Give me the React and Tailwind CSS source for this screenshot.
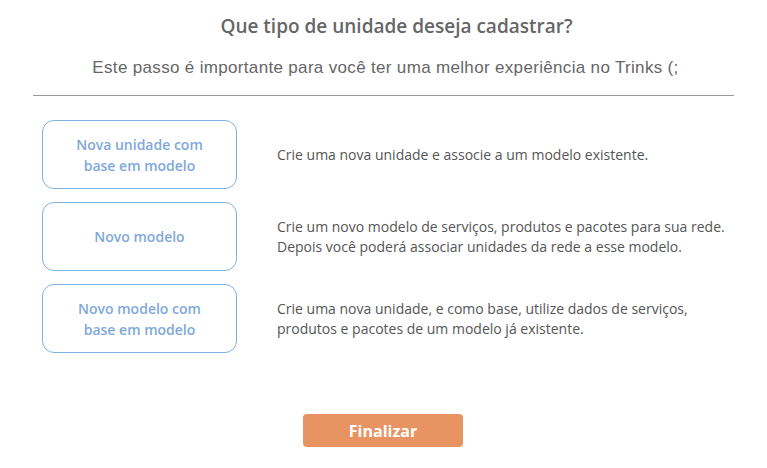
const options = [
  {
    label: ["Nova unidade com", "base em modelo"],
    text: ["Crie uma nova unidade e associe a um modelo existente."],
  },
  {
    label: ["Novo modelo"],
    text: [
      "Crie um novo modelo de serviços, produtos e pacotes para sua rede.",
      "Depois você poderá associar unidades da rede a esse modelo.",
    ],
  },
  {
    label: ["Novo modelo com", "base em modelo"],
    text: [
      "Crie uma nova unidade, e como base, utilize dados de serviços,",
      "produtos e pacotes de um modelo já existente.",
    ],
  },
];

export default function App() {
  return (
    <div className="min-h-screen w-[767px] bg-white font-['Open_Sans',sans-serif]">
      <div className="flex flex-col items-center pt-[14px]">
        <h1 className="ml-[26px] text-[19px] font-semibold leading-[24px] text-[#666]">
          Que tipo de unidade deseja cadastrar?
        </h1>
        <p className="mt-[20px] ml-[4px] font-['Liberation_Sans',Arial,sans-serif] text-[17px] leading-[20px] tracking-[0.33px] text-[#666]">
          Este passo é importante para você ter uma melhor experiência no Trinks (;
        </p>
      </div>
      <div className="mx-[33px] mt-[17px] h-px bg-[#999]" />

      <div className="mt-[24px] flex flex-col gap-[13px] pl-[42px]">
        {options.map((o, i) => (
          <div key={i} className="flex items-center">
            <button
              type="button"
              className="flex h-[69px] w-[195px] shrink-0 flex-col items-center justify-center rounded-[12px] border border-[#7fb0e0] text-[14px] font-semibold leading-[21px] text-[#7fa8da]"
            >
              {o.label.map((l) => (
                <span key={l}>{l}</span>
              ))}
            </button>
            <p className="ml-[40px] text-[14px] leading-[20px] text-[#555]">
              {o.text.map((t) => (
                <span key={t} className="block">
                  {t}
                </span>
              ))}
            </p>
          </div>
        ))}
      </div>

      <div className="mt-[61px] flex justify-center">
        <button
          type="button"
          className="ml-[-1px] h-[33px] w-[160px] rounded-[4px] bg-[#e89462] text-[16px] font-bold text-white"
        >
          Finalizar
        </button>
      </div>
    </div>
  );
}
